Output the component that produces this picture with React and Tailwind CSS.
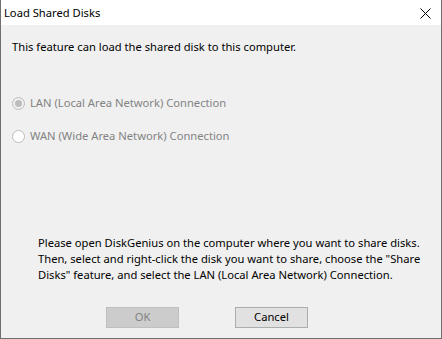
export default function App() {
  return (
    <div className="flex h-[339px] w-[442px] flex-col overflow-hidden border border-t-0 border-[#6f6f6f] bg-[#f0f0f0] text-[11.2px] text-black [font-family:'Noto_Sans',sans-serif]">
      <div className="flex h-[25px] shrink-0 items-center justify-between bg-white pl-[3px] pr-[10px]">
        <span className="text-[11.2px] leading-none">Load Shared Disks</span>
        <svg width="11" height="11" viewBox="0 0 11 11" className="mt-[1px]">
          <path d="M0.5 0.5L10.5 10.5M10.5 0.5L0.5 10.5" stroke="#000" strokeWidth="1" />
        </svg>
      </div>
      <div className="flex flex-1 flex-col pl-[11px]">
        <p className="mt-[14px] leading-[16px]">This feature can load the shared disk to this computer.</p>
        <div className="mt-[40px] flex h-[16px] items-center gap-[5px] text-[#838383]">
          <span className="flex h-[13px] w-[13px] items-center justify-center rounded-full border border-[#bcbcbc] bg-[#f0f0f0]">
            <span className="h-[7px] w-[7px] rounded-full bg-[#bcbcbc]" />
          </span>
          <span className="leading-[16px]">LAN (Local Area Network) Connection</span>
        </div>
        <div className="mt-[17px] flex h-[16px] items-center gap-[5px] text-[#838383]">
          <span className="h-[13px] w-[13px] rounded-full border border-[#bcbcbc] bg-white" />
          <span className="leading-[16px]">WAN (Wide Area Network) Connection</span>
        </div>
        <p className="mt-[91px] whitespace-nowrap pl-[26px] leading-[16px]">
          Please open DiskGenius on the computer where you want to share disks.
          <br />
          Then, select and right-click the disk you want to share, choose the "Share
          <br />
          Disks" feature, and select the LAN (Local Area Network) Connection.
        </p>
        <div className="mt-[24px] flex gap-[56px] pl-[94px]">
          <button className="h-[21px] w-[73px] border border-[#bfbfbf] bg-[#cccccc] text-[#838383]">OK</button>
          <button className="h-[21px] w-[73px] border border-[#adadad] bg-[#e1e1e1] text-black">Cancel</button>
        </div>
      </div>
    </div>
  )
}
